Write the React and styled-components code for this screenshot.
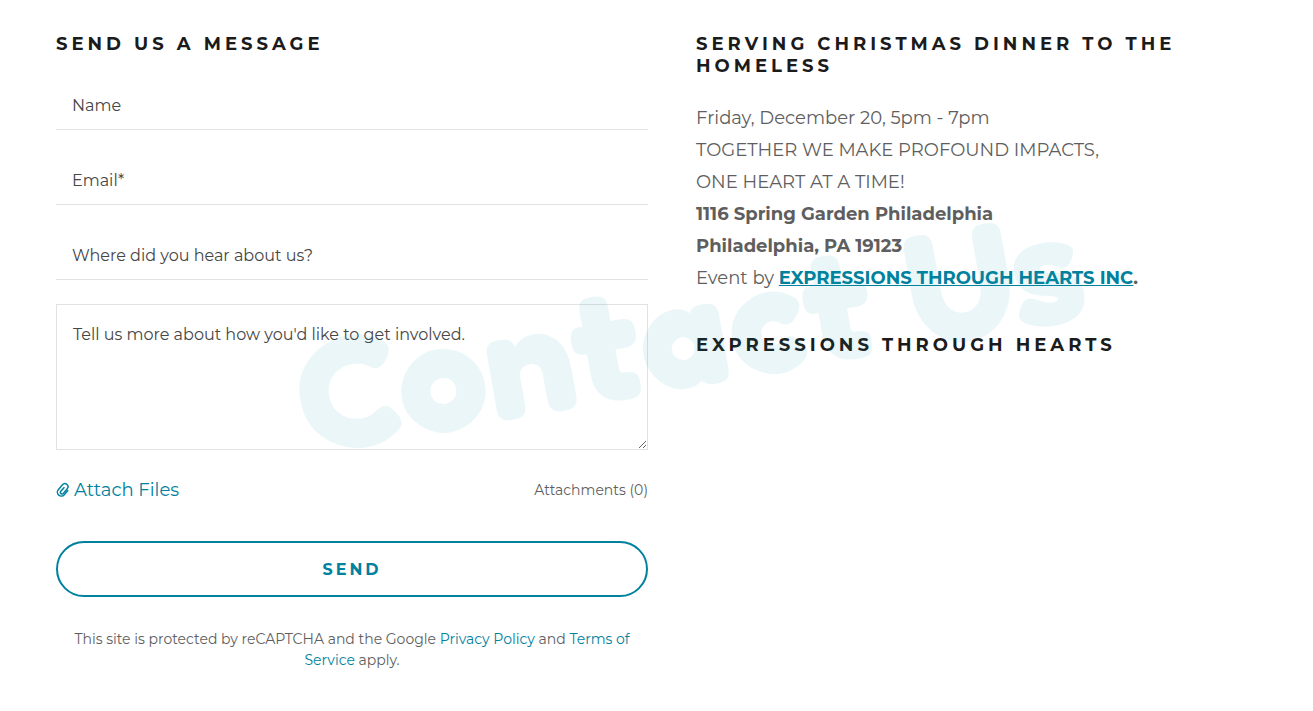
import React from "react";
import styled, { createGlobalStyle } from "styled-components";

const GlobalStyle = createGlobalStyle`
  *, *::before, *::after { box-sizing: border-box; }
  body {
    margin: 0;
    background: #fff;
    color: #5e5e5e;
    font-family: Montserrat, Inter, "Liberation Sans", sans-serif;
    font-weight: 400;
  }
`;

const Page = styled.main`
  position: relative;
  overflow: hidden;
  min-height: 100vh;
  padding: 33px 25px 40px 56px;
  display: grid;
  grid-template-columns: 1fr 1fr;
  column-gap: 48px;
  align-items: start;
`;

const Heading = styled.h2`
  margin: 0;
  font-size: 18px;
  line-height: 22px;
  font-weight: 700;
  letter-spacing: 4px;
  text-transform: uppercase;
  color: #1b1b1b;
`;

const Form = styled.form`
  display: flex;
  flex-direction: column;
  gap: 24px;
`;

const Field = styled.input`
  width: 100%;
  height: 51px;
  padding: 2px 16px 0;
  border: 0;
  border-bottom: 1px solid #e2e2e2;
  border-radius: 0;
  background: transparent;
  color: #464646;
  font: inherit;
  font-size: 16px;
  outline-color: #00819e;
  &::placeholder { color: #464646; opacity: 1; }
`;

const Message = styled.textarea`
  display: block;
  width: 100%;
  height: 146px;
  padding: 18px 16px;
  border: 1px solid #e2e2e2;
  border-radius: 0;
  background: transparent;
  color: #464646;
  font: inherit;
  font-size: 16px;
  line-height: 24px;
  resize: vertical;
  outline-color: #00819e;
  &::placeholder { color: #464646; opacity: 1; }
`;

const AttachRow = styled.div`
  display: flex;
  align-items: center;
  justify-content: space-between;
  height: 32px;
`;

const AttachButton = styled.button`
  display: flex;
  align-items: center;
  gap: 4px;
  padding: 0;
  border: 0;
  background: none;
  color: #00819e;
  font: inherit;
  font-size: 18px;
  line-height: 32px;
  cursor: pointer;
`;

const AttachCount = styled.span`
  font-size: 14px;
  line-height: 22px;
`;

const SendButton = styled.button`
  width: 100%;
  height: 56px;
  margin-top: 11px;
  border: 2px solid #00819e;
  border-radius: 28px;
  background: transparent;
  color: #00819e;
  font: inherit;
  font-size: 16px;
  font-weight: 700;
  letter-spacing: 3px;
  text-transform: uppercase;
  cursor: pointer;
`;

const Note = styled.p`
  margin: 8px 0 0;
  font-size: 14px;
  line-height: 21px;
  text-align: center;
`;

const NoteLink = styled.a`
  color: #00819e;
  text-decoration: none;
`;

const Details = styled.section`
  display: flex;
  flex-direction: column;
  gap: 40px;
`;

const EventBlock = styled.div`
  display: flex;
  flex-direction: column;
  gap: 25px;
`;

const EventText = styled.p`
  margin: 0;
  font-size: 18px;
  line-height: 32px;
  strong { font-weight: 700; }
`;

const EventLink = styled.a`
  color: #00819e;
  text-decoration: underline;
`;

const Watermark = styled.div`
  position: absolute;
  left: 689px;
  top: 328px;
  transform: translate(-50%, -50%) rotate(-10deg);
  font-family: Fredoka, Lato, sans-serif;
  font-size: 159px;
  line-height: 1;
  font-weight: 700;
  white-space: nowrap;
  color: #059bb4;
  opacity: 0.08;
  pointer-events: none;
  user-select: none;
`;

const PaperclipIcon = () => (
  <svg width="14" height="16" viewBox="0 0 14 16" fill="none" stroke="currentColor" strokeWidth="1.5" strokeLinecap="round" strokeLinejoin="round" aria-hidden="true">
    <path transform="rotate(40 7 8)" d="M11 5.5v5.3a3.9 3.9 0 0 1-7.8 0V4.3a3.1 3.1 0 0 1 6.2 0v6.1a1.6 1.6 0 0 1-3.2 0V5.6" />
  </svg>
);

export default function App() {
  return (
    <>
      <GlobalStyle />
      <Page>
        <Form onSubmit={(e) => e.preventDefault()}>
          <Heading>Send us a message</Heading>
          <Field type="text" name="name" placeholder="Name" aria-label="Name" />
          <Field type="email" name="email" placeholder="Email*" aria-label="Email" />
          <Field type="text" name="source" placeholder="Where did you hear about us?" aria-label="Where did you hear about us?" />
          <Message name="message" placeholder="Tell us more about how you'd like to get involved." aria-label="Tell us more about how you'd like to get involved." />
          <AttachRow>
            <AttachButton type="button"><PaperclipIcon />Attach Files</AttachButton>
            <AttachCount>Attachments (0)</AttachCount>
          </AttachRow>
          <SendButton type="submit">Send</SendButton>
          <Note>
            This site is protected by reCAPTCHA and the Google{" "}
            <NoteLink href="#privacy">Privacy Policy</NoteLink> and{" "}
            <NoteLink href="#terms">Terms of Service</NoteLink> apply.
          </Note>
        </Form>
        <Details>
          <EventBlock>
            <Heading>Serving Christmas dinner to the homeless</Heading>
            <EventText>
              Friday, December 20, 5pm - 7pm<br />
              TOGETHER WE MAKE PROFOUND IMPACTS,<br />
              ONE HEART AT A TIME!<br />
              <strong>1116 Spring Garden Philadelphia</strong><br />
              <strong>Philadelphia, PA 19123</strong><br />
              Event by <strong><EventLink href="#organizer">EXPRESSIONS THROUGH HEARTS INC</EventLink>.</strong>
            </EventText>
          </EventBlock>
          <Heading>Expressions Through Hearts</Heading>
        </Details>
        <Watermark aria-hidden="true">Contact Us</Watermark>
      </Page>
    </>
  );
}
